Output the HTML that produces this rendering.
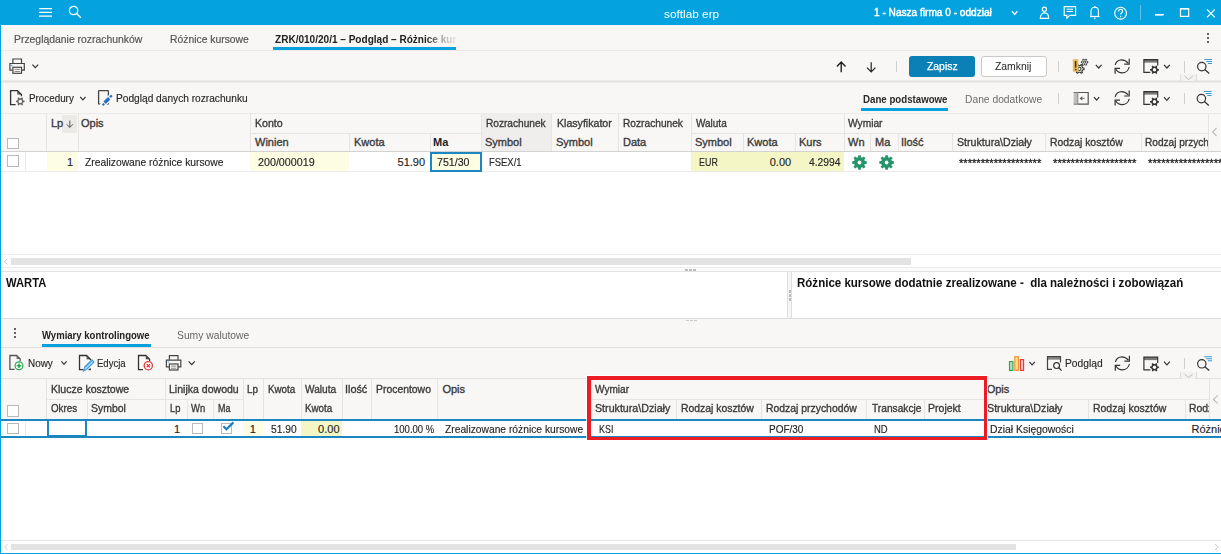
<!DOCTYPE html>
<html><head><meta charset="utf-8"><style>
html,body{margin:0;padding:0;width:1221px;height:554px;overflow:hidden;background:#f8f7f5;font-family:'Liberation Sans', sans-serif}
</style></head><body><div style="position:relative;width:1221px;height:554px;overflow:hidden">
<div style="position:absolute;left:0px;top:0px;width:1221px;height:554px;background:#f8f7f5"></div>
<div style="position:absolute;left:0px;top:0px;width:1221px;height:25px;background:#04a3e0"></div>
<div style="position:absolute;top:7px;font:400 11px/14px 'Liberation Sans', sans-serif;color:#fff;white-space:pre;left:664.20px;transform:scaleX(1.0733);transform-origin:0 0;">softlab erp</div>
<div style="position:absolute;top:5px;font:400 10.5px/14px 'Liberation Sans', sans-serif;color:#fff;white-space:pre;-webkit-text-stroke:0.45px #fff;left:874.00px;transform:scaleX(0.9618);transform-origin:0 0;">1 - Nasza firma 0 - oddział</div>
<div style="position:absolute;left:1140px;top:5px;width:1px;height:15px;background:#5cc3ea"></div>
<div style="position:absolute;left:1155px;top:14px;width:9px;height:1.3px;background:#fff"></div>
<div style="position:absolute;left:1180px;top:8px;width:9px;height:9px;border:1.2px solid #fff;box-sizing:border-box"></div>
<div style="position:absolute;left:0px;top:25px;width:1px;height:529px;background:#04a3e0"></div>
<div style="position:absolute;left:0px;top:553px;width:1221px;height:1px;background:#04a3e0"></div>
<div style="position:absolute;left:1px;top:50px;width:1221px;height:1px;background:#ebe9e6"></div>
<div style="position:absolute;top:32px;font:400 11px/14px 'Liberation Sans', sans-serif;color:#555;white-space:pre;-webkit-text-stroke:0.2px #555;left:14.30px;transform:scaleX(0.9448);transform-origin:0 0;">Przeglądanie rozrachunków</div>
<div style="position:absolute;top:32px;font:400 11px/14px 'Liberation Sans', sans-serif;color:#555;white-space:pre;-webkit-text-stroke:0.2px #555;left:169.50px;transform:scaleX(0.9409);transform-origin:0 0;">Różnice kursowe</div>
<div style="position:absolute;top:32px;font:700 11px/14px 'Liberation Sans', sans-serif;color:#222;white-space:pre;-webkit-mask-image:linear-gradient(90deg,#000 0,#000 166px,rgba(0,0,0,.45) 180px,rgba(0,0,0,.15) 194px,rgba(0,0,0,0) 204px);left:274.60px;transform:scaleX(0.9128);transform-origin:0 0;">ZRK/010/20/1 – Podgląd – Różnice kur</div>
<div style="position:absolute;left:273px;top:47px;width:183px;height:3px;background:#0aa0dd"></div>
<div style="position:absolute;left:1207px;top:33px;width:2.2px;height:2.2px;background:#333;border-radius:50%"></div>
<div style="position:absolute;left:1207px;top:37px;width:2.2px;height:2.2px;background:#333;border-radius:50%"></div>
<div style="position:absolute;left:1207px;top:41px;width:2.2px;height:2.2px;background:#333;border-radius:50%"></div>
<div style="position:absolute;left:1px;top:80px;width:1221px;height:1px;background:#ebebea"></div>
<div style="position:absolute;left:1px;top:81px;width:1221px;height:1px;background:#e0e0df"></div>
<div style="position:absolute;left:1px;top:82px;width:1221px;height:1px;background:#ececeb"></div>
<div style="position:absolute;left:896px;top:61px;width:1px;height:11px;background:#cfcfcf"></div>
<div style="position:absolute;left:909px;top:56px;width:66px;height:21px;background:#0b80b6;border-radius:3px"></div>
<div style="position:absolute;top:59px;font:400 11px/14px 'Liberation Sans', sans-serif;color:#fff;white-space:pre;-webkit-text-stroke:0.25px #fff;left:926.90px;transform:scaleX(0.9436);transform-origin:0 0;">Zapisz</div>
<div style="position:absolute;left:981px;top:56px;width:66px;height:21px;background:#fff;border:1px solid #c9c9c9;border-radius:3px;box-sizing:border-box"></div>
<div style="position:absolute;top:59px;font:400 11px/14px 'Liberation Sans', sans-serif;color:#222;white-space:pre;left:995.40px;transform:scaleX(0.9432);transform-origin:0 0;">Zamknij</div>
<div style="position:absolute;left:1058px;top:61px;width:1px;height:11px;background:#cfcfcf"></div>
<div style="position:absolute;left:1184px;top:61px;width:1px;height:12px;background:#cfcfcf"></div>
<div style="position:absolute;left:1180px;top:74px;width:17px;height:8px;background:#f3f2f0;border:1px solid #e0dedb;border-top:none;border-radius:0 0 3px 3px;box-sizing:border-box"></div>
<div style="position:absolute;left:1px;top:113px;width:1221px;height:1px;background:#ebebea"></div>
<div style="position:absolute;top:91px;font:400 10.5px/14px 'Liberation Sans', sans-serif;color:#262626;white-space:pre;-webkit-text-stroke:0.15px #262626;left:28.80px;transform:scaleX(0.9361);transform-origin:0 0;">Procedury</div>
<div style="position:absolute;top:91px;font:400 10.5px/14px 'Liberation Sans', sans-serif;color:#262626;white-space:pre;-webkit-text-stroke:0.15px #262626;left:115.50px;transform:scaleX(0.9679);transform-origin:0 0;">Podgląd danych rozrachunku</div>
<div style="position:absolute;top:92px;font:700 11px/14px 'Liberation Sans', sans-serif;color:#2a2a2a;white-space:pre;left:862.60px;transform:scaleX(0.8806);transform-origin:0 0;">Dane podstawowe</div>
<div style="position:absolute;left:861px;top:108px;width:87px;height:3px;background:#0aa0dd"></div>
<div style="position:absolute;top:92px;font:400 11px/14px 'Liberation Sans', sans-serif;color:#6c6c6c;white-space:pre;left:965.00px;transform:scaleX(0.9340);transform-origin:0 0;">Dane dodatkowe</div>
<div style="position:absolute;left:1058px;top:93px;width:1px;height:11px;background:#cfcfcf"></div>
<div style="position:absolute;left:1184px;top:93px;width:1px;height:11px;background:#cfcfcf"></div>
<div style="position:absolute;left:1px;top:114px;width:1221px;height:37px;background:#f8f7f5"></div>
<div style="position:absolute;left:1px;top:152px;width:1221px;height:103px;background:#fff"></div>
<div style="position:absolute;left:1px;top:151px;width:1221px;height:1px;background:#d2d2d1"></div>
<div style="position:absolute;left:46px;top:114px;width:1px;height:37px;background:#e6e4e1"></div>
<div style="position:absolute;left:78px;top:114px;width:1px;height:37px;background:#e6e4e1"></div>
<div style="position:absolute;left:250px;top:114px;width:1px;height:37px;background:#e6e4e1"></div>
<div style="position:absolute;left:481px;top:114px;width:1px;height:37px;background:#e6e4e1"></div>
<div style="position:absolute;left:551px;top:114px;width:1px;height:37px;background:#e6e4e1"></div>
<div style="position:absolute;left:618px;top:114px;width:1px;height:37px;background:#e6e4e1"></div>
<div style="position:absolute;left:691px;top:114px;width:1px;height:37px;background:#e6e4e1"></div>
<div style="position:absolute;left:844px;top:114px;width:1px;height:37px;background:#e6e4e1"></div>
<div style="position:absolute;left:250px;top:133px;width:231px;height:1px;background:#e6e4e1"></div>
<div style="position:absolute;left:691px;top:133px;width:153px;height:1px;background:#e6e4e1"></div>
<div style="position:absolute;left:844px;top:133px;width:364px;height:1px;background:#e6e4e1"></div>
<div style="position:absolute;left:349px;top:133px;width:1px;height:18px;background:#e6e4e1"></div>
<div style="position:absolute;left:430px;top:133px;width:1px;height:18px;background:#e6e4e1"></div>
<div style="position:absolute;left:743px;top:133px;width:1px;height:18px;background:#e6e4e1"></div>
<div style="position:absolute;left:795px;top:133px;width:1px;height:18px;background:#e6e4e1"></div>
<div style="position:absolute;left:870px;top:133px;width:1px;height:18px;background:#e6e4e1"></div>
<div style="position:absolute;left:898px;top:133px;width:1px;height:18px;background:#e6e4e1"></div>
<div style="position:absolute;left:952px;top:133px;width:1px;height:18px;background:#e6e4e1"></div>
<div style="position:absolute;left:1045px;top:133px;width:1px;height:18px;background:#e6e4e1"></div>
<div style="position:absolute;left:1141px;top:133px;width:1px;height:18px;background:#e6e4e1"></div>
<div style="position:absolute;left:482px;top:114px;width:69px;height:37px;background:#efeeec"></div>
<div style="position:absolute;left:62px;top:115px;width:15px;height:18px;background:#eceae7"></div>
<div style="position:absolute;left:1208px;top:114px;width:1px;height:37px;background:#e6e4e1"></div>
<div style="position:absolute;left:7px;top:138px;width:12px;height:11px;background:#fff;border:1px solid #b9b9b9;box-sizing:border-box"></div>
<div style="position:absolute;top:116px;font:400 11px/14px 'Liberation Sans', sans-serif;color:#3b3b3b;white-space:pre;-webkit-text-stroke:0.35px #3b3b3b;left:51.00px;">Lp</div>
<div style="position:absolute;top:116px;font:400 11px/14px 'Liberation Sans', sans-serif;color:#3b3b3b;white-space:pre;-webkit-text-stroke:0.35px #3b3b3b;left:81.00px;">Opis</div>
<div style="position:absolute;top:116px;font:400 11px/14px 'Liberation Sans', sans-serif;color:#3b3b3b;white-space:pre;-webkit-text-stroke:0.35px #3b3b3b;left:254.70px;transform:scaleX(0.9641);transform-origin:0 0;">Konto</div>
<div style="position:absolute;top:116px;font:400 11px/14px 'Liberation Sans', sans-serif;color:#3b3b3b;white-space:pre;-webkit-text-stroke:0.35px #3b3b3b;left:485.80px;transform:scaleX(0.9202);transform-origin:0 0;">Rozrachunek</div>
<div style="position:absolute;top:116px;font:400 11px/14px 'Liberation Sans', sans-serif;color:#3b3b3b;white-space:pre;-webkit-text-stroke:0.35px #3b3b3b;left:556.60px;transform:scaleX(0.9635);transform-origin:0 0;">Klasyfikator</div>
<div style="position:absolute;top:116px;font:400 11px/14px 'Liberation Sans', sans-serif;color:#3b3b3b;white-space:pre;-webkit-text-stroke:0.35px #3b3b3b;left:623.20px;transform:scaleX(0.9248);transform-origin:0 0;">Rozrachunek</div>
<div style="position:absolute;top:116px;font:400 11px/14px 'Liberation Sans', sans-serif;color:#3b3b3b;white-space:pre;-webkit-text-stroke:0.35px #3b3b3b;left:695.90px;transform:scaleX(0.9075);transform-origin:0 0;">Waluta</div>
<div style="position:absolute;top:116px;font:400 11px/14px 'Liberation Sans', sans-serif;color:#3b3b3b;white-space:pre;-webkit-text-stroke:0.35px #3b3b3b;left:848.00px;transform:scaleX(0.9277);transform-origin:0 0;">Wymiar</div>
<div style="position:absolute;top:135px;font:400 11px/14px 'Liberation Sans', sans-serif;color:#3b3b3b;white-space:pre;-webkit-text-stroke:0.35px #3b3b3b;left:255.00px;">Winien</div>
<div style="position:absolute;top:135px;font:400 11px/14px 'Liberation Sans', sans-serif;color:#3b3b3b;white-space:pre;-webkit-text-stroke:0.35px #3b3b3b;left:354.00px;">Kwota</div>
<div style="position:absolute;top:135px;font:700 11px/14px 'Liberation Sans', sans-serif;color:#222;white-space:pre;left:433.00px;">Ma</div>
<div style="position:absolute;top:135px;font:400 11px/14px 'Liberation Sans', sans-serif;color:#3b3b3b;white-space:pre;-webkit-text-stroke:0.35px #3b3b3b;left:485.00px;">Symbol</div>
<div style="position:absolute;top:135px;font:400 11px/14px 'Liberation Sans', sans-serif;color:#3b3b3b;white-space:pre;-webkit-text-stroke:0.35px #3b3b3b;left:556.00px;">Symbol</div>
<div style="position:absolute;top:135px;font:400 11px/14px 'Liberation Sans', sans-serif;color:#3b3b3b;white-space:pre;-webkit-text-stroke:0.35px #3b3b3b;left:623.00px;">Data</div>
<div style="position:absolute;top:135px;font:400 11px/14px 'Liberation Sans', sans-serif;color:#3b3b3b;white-space:pre;-webkit-text-stroke:0.35px #3b3b3b;left:695.00px;">Symbol</div>
<div style="position:absolute;top:135px;font:400 11px/14px 'Liberation Sans', sans-serif;color:#3b3b3b;white-space:pre;-webkit-text-stroke:0.35px #3b3b3b;left:747.00px;">Kwota</div>
<div style="position:absolute;top:135px;font:400 11px/14px 'Liberation Sans', sans-serif;color:#3b3b3b;white-space:pre;-webkit-text-stroke:0.35px #3b3b3b;left:799.00px;">Kurs</div>
<div style="position:absolute;top:135px;font:400 11px/14px 'Liberation Sans', sans-serif;color:#3b3b3b;white-space:pre;-webkit-text-stroke:0.35px #3b3b3b;left:848.00px;">Wn</div>
<div style="position:absolute;top:135px;font:400 11px/14px 'Liberation Sans', sans-serif;color:#3b3b3b;white-space:pre;-webkit-text-stroke:0.35px #3b3b3b;left:875.00px;">Ma</div>
<div style="position:absolute;top:135px;font:400 11px/14px 'Liberation Sans', sans-serif;color:#3b3b3b;white-space:pre;-webkit-text-stroke:0.35px #3b3b3b;left:901.00px;">Ilość</div>
<div style="position:absolute;top:135px;font:400 11px/14px 'Liberation Sans', sans-serif;color:#3b3b3b;white-space:pre;-webkit-text-stroke:0.35px #3b3b3b;left:956.60px;transform:scaleX(0.9650);transform-origin:0 0;">Struktura\Działy</div>
<div style="position:absolute;top:135px;font:400 11px/14px 'Liberation Sans', sans-serif;color:#3b3b3b;white-space:pre;-webkit-text-stroke:0.35px #3b3b3b;left:1049.60px;transform:scaleX(0.9431);transform-origin:0 0;">Rodzaj kosztów</div>
<div style="position:absolute;left:1141px;top:133px;width:67px;height:18px;overflow:hidden">
<div style="position:absolute;top:2px;font:400 11px/14px 'Liberation Sans', sans-serif;color:#3b3b3b;white-space:pre;-webkit-text-stroke:0.35px #3b3b3b;left:3.50px;transform:scaleX(0.9162);transform-origin:0 0;">Rodzaj przychodów</div>
</div>
<div style="position:absolute;left:1px;top:171px;width:1221px;height:1px;background:#ebebeb"></div>
<div style="position:absolute;left:25px;top:152px;width:1px;height:19px;background:#ececec"></div>
<div style="position:absolute;left:47px;top:152px;width:31px;height:19px;background:#fdfde3"></div>
<div style="position:absolute;left:250px;top:152px;width:99px;height:19px;background:#fdfde3"></div>
<div style="position:absolute;left:691px;top:152px;width:153px;height:19px;background:#f4f7c5"></div>
<div style="position:absolute;left:7px;top:155px;width:12px;height:12px;background:#fff;border:1px solid #b9b9b9;box-sizing:border-box"></div>
<div style="position:absolute;top:155px;font:400 11px/14px 'Liberation Sans', sans-serif;color:#262626;white-space:pre;-webkit-text-stroke:0.15px #262626;left:67.00px;">1</div>
<div style="position:absolute;top:155px;font:400 11px/14px 'Liberation Sans', sans-serif;color:#262626;white-space:pre;-webkit-text-stroke:0.15px #262626;left:84.60px;transform:scaleX(0.9362);transform-origin:0 0;">Zrealizowane różnice kursowe</div>
<div style="position:absolute;top:155px;font:400 11px/14px 'Liberation Sans', sans-serif;color:#262626;white-space:pre;-webkit-text-stroke:0.15px #262626;left:257.50px;transform:scaleX(0.9742);transform-origin:0 0;">200/000019</div>
<div style="position:absolute;top:155px;font:400 11px/14px 'Liberation Sans', sans-serif;color:#262626;white-space:pre;-webkit-text-stroke:0.15px #262626;left:397.59px;">51.90</div>
<div style="position:absolute;left:430px;top:152px;width:52px;height:20px;background:#fdfde3;border:2px solid #1b86c0;box-sizing:border-box"></div>
<div style="position:absolute;top:155px;font:400 11px/14px 'Liberation Sans', sans-serif;color:#262626;white-space:pre;-webkit-text-stroke:0.15px #262626;left:436.80px;transform:scaleX(0.9664);transform-origin:0 0;">751/30</div>
<div style="position:absolute;top:155px;font:400 11px/14px 'Liberation Sans', sans-serif;color:#262626;white-space:pre;-webkit-text-stroke:0.15px #262626;left:488.60px;transform:scaleX(0.8575);transform-origin:0 0;">FSEX/1</div>
<div style="position:absolute;top:155px;font:400 11px/14px 'Liberation Sans', sans-serif;color:#262626;white-space:pre;-webkit-text-stroke:0.15px #262626;left:698.60px;transform:scaleX(0.8118);transform-origin:0 0;">EUR</div>
<div style="position:absolute;top:155px;font:400 11px/14px 'Liberation Sans', sans-serif;color:#262626;white-space:pre;-webkit-text-stroke:0.15px #262626;left:769.71px;">0.00</div>
<div style="position:absolute;top:155px;font:400 11px/14px 'Liberation Sans', sans-serif;color:#262626;white-space:pre;-webkit-text-stroke:0.15px #262626;left:808.50px;transform:scaleX(0.9395);transform-origin:0 0;">4.2994</div>
<div style="position:absolute;left:952px;top:152px;width:93px;height:19px;overflow:hidden">
<div style="position:absolute;top:4px;font:400 11px/14px 'Liberation Sans', sans-serif;color:#222;white-space:pre;-webkit-text-stroke:0.3px #222;left:7.00px;transform:scaleX(1.0115);transform-origin:0 0;">*******************</div>
</div>
<div style="position:absolute;top:156px;font:400 11px/14px 'Liberation Sans', sans-serif;color:#222;white-space:pre;-webkit-text-stroke:0.3px #222;left:1052.60px;transform:scaleX(1.0237);transform-origin:0 0;">*******************</div>
<div style="position:absolute;top:156px;font:400 11px/14px 'Liberation Sans', sans-serif;color:#222;white-space:pre;-webkit-text-stroke:0.3px #222;left:1147.50px;transform:scaleX(1.0237);transform-origin:0 0;">*******************</div>
<div style="position:absolute;left:1px;top:254px;width:1221px;height:1px;background:#ececec"></div>
<div style="position:absolute;left:1px;top:255px;width:1221px;height:13px;background:#fff"></div>
<div style="position:absolute;left:11px;top:258px;width:900px;height:7px;background:#e3e3e3"></div>
<div style="position:absolute;left:1px;top:267px;width:1221px;height:1px;background:#ececec"></div>
<div style="position:absolute;left:1px;top:268px;width:1221px;height:3px;background:#fbfbfa"></div>
<div style="position:absolute;left:685px;top:269px;width:3px;height:1.5px;background:#bbb"></div>
<div style="position:absolute;left:689px;top:269px;width:3px;height:1.5px;background:#bbb"></div>
<div style="position:absolute;left:693px;top:269px;width:3px;height:1.5px;background:#bbb"></div>
<div style="position:absolute;left:1px;top:271px;width:1221px;height:1px;background:#e2e2e2"></div>
<div style="position:absolute;left:1px;top:272px;width:1221px;height:46px;background:#fff"></div>
<div style="position:absolute;left:787px;top:272px;width:1px;height:46px;background:#dedede"></div>
<div style="position:absolute;left:788px;top:272px;width:4px;height:46px;background:#f6f6f6"></div>
<div style="position:absolute;left:791px;top:272px;width:1px;height:46px;background:#dedede"></div>
<div style="position:absolute;left:789px;top:290px;width:1.5px;height:3px;background:#bbb"></div>
<div style="position:absolute;left:789px;top:294px;width:1.5px;height:3px;background:#bbb"></div>
<div style="position:absolute;left:789px;top:298px;width:1.5px;height:3px;background:#bbb"></div>
<div style="position:absolute;top:276px;font:700 12px/14px 'Liberation Sans', sans-serif;color:#111;white-space:pre;left:6.00px;transform:scaleX(0.9347);transform-origin:0 0;">WARTA</div>
<div style="position:absolute;top:276px;font:700 12px/14px 'Liberation Sans', sans-serif;color:#111;white-space:pre;left:796.70px;transform:scaleX(0.9608);transform-origin:0 0;">Różnice kursowe dodatnie zrealizowane -  dla należności i zobowiązań</div>
<div style="position:absolute;left:1px;top:318px;width:1221px;height:1px;background:#dcdcdc"></div>
<div style="position:absolute;left:686px;top:320px;width:3px;height:1px;background:#ccc"></div>
<div style="position:absolute;left:690px;top:320px;width:3px;height:1px;background:#ccc"></div>
<div style="position:absolute;left:694px;top:320px;width:3px;height:1px;background:#ccc"></div>
<div style="position:absolute;left:13.8px;top:328px;width:2.2px;height:2.2px;background:#333;border-radius:50%"></div>
<div style="position:absolute;left:13.8px;top:332px;width:2.2px;height:2.2px;background:#333;border-radius:50%"></div>
<div style="position:absolute;left:13.8px;top:336px;width:2.2px;height:2.2px;background:#333;border-radius:50%"></div>
<div style="position:absolute;top:328px;font:700 11px/14px 'Liberation Sans', sans-serif;color:#222;white-space:pre;left:41.80px;transform:scaleX(0.8686);transform-origin:0 0;">Wymiary kontrolingowe</div>
<div style="position:absolute;left:42px;top:344px;width:109px;height:3px;background:#0aa0dd"></div>
<div style="position:absolute;top:328px;font:400 11px/14px 'Liberation Sans', sans-serif;color:#666;white-space:pre;left:176.80px;transform:scaleX(0.9374);transform-origin:0 0;">Sumy walutowe</div>
<div style="position:absolute;left:1px;top:347px;width:1221px;height:1px;background:#e0dedb"></div>
<div style="position:absolute;top:356px;font:400 11px/14px 'Liberation Sans', sans-serif;color:#262626;white-space:pre;-webkit-text-stroke:0.15px #262626;left:27.50px;transform:scaleX(0.8998);transform-origin:0 0;">Nowy</div>
<div style="position:absolute;top:356px;font:400 11px/14px 'Liberation Sans', sans-serif;color:#262626;white-space:pre;-webkit-text-stroke:0.15px #262626;left:97.30px;transform:scaleX(0.8643);transform-origin:0 0;">Edycja</div>
<div style="position:absolute;top:356px;font:400 11px/14px 'Liberation Sans', sans-serif;color:#262626;white-space:pre;-webkit-text-stroke:0.15px #262626;left:1064.80px;transform:scaleX(0.9316);transform-origin:0 0;">Podgląd</div>
<div style="position:absolute;left:1184px;top:358px;width:1px;height:11px;background:#cfcfcf"></div>
<div style="position:absolute;left:1px;top:378px;width:1221px;height:1px;background:#e4e2df"></div>
<div style="position:absolute;left:1180px;top:372px;width:17px;height:8px;background:#f3f2f0;border:1px solid #e0dedb;border-top:none;border-radius:0 0 3px 3px;box-sizing:border-box"></div>
<div style="position:absolute;left:1px;top:379px;width:1221px;height:40px;background:#f8f7f5"></div>
<div style="position:absolute;left:46px;top:379px;width:1px;height:40px;background:#e6e4e1"></div>
<div style="position:absolute;left:243px;top:379px;width:1px;height:40px;background:#e6e4e1"></div>
<div style="position:absolute;left:263px;top:379px;width:1px;height:40px;background:#e6e4e1"></div>
<div style="position:absolute;left:301px;top:379px;width:1px;height:40px;background:#e6e4e1"></div>
<div style="position:absolute;left:342px;top:379px;width:1px;height:40px;background:#e6e4e1"></div>
<div style="position:absolute;left:371px;top:379px;width:1px;height:40px;background:#e6e4e1"></div>
<div style="position:absolute;left:437px;top:379px;width:1px;height:40px;background:#e6e4e1"></div>
<div style="position:absolute;left:591px;top:379px;width:1px;height:40px;background:#e6e4e1"></div>
<div style="position:absolute;left:987px;top:379px;width:1px;height:40px;background:#e6e4e1"></div>
<div style="position:absolute;left:47px;top:399px;width:196px;height:1px;background:#e6e4e1"></div>
<div style="position:absolute;left:591px;top:399px;width:396px;height:1px;background:#e6e4e1"></div>
<div style="position:absolute;left:987px;top:399px;width:222px;height:1px;background:#e6e4e1"></div>
<div style="position:absolute;left:87px;top:399px;width:1px;height:20px;background:#e6e4e1"></div>
<div style="position:absolute;left:165px;top:399px;width:1px;height:20px;background:#e6e4e1"></div>
<div style="position:absolute;left:187px;top:399px;width:1px;height:20px;background:#e6e4e1"></div>
<div style="position:absolute;left:213px;top:399px;width:1px;height:20px;background:#e6e4e1"></div>
<div style="position:absolute;left:676px;top:399px;width:1px;height:20px;background:#e6e4e1"></div>
<div style="position:absolute;left:761px;top:399px;width:1px;height:20px;background:#e6e4e1"></div>
<div style="position:absolute;left:866px;top:399px;width:1px;height:20px;background:#e6e4e1"></div>
<div style="position:absolute;left:924px;top:399px;width:1px;height:20px;background:#e6e4e1"></div>
<div style="position:absolute;left:1088px;top:399px;width:1px;height:20px;background:#e6e4e1"></div>
<div style="position:absolute;left:1185px;top:399px;width:1px;height:20px;background:#e6e4e1"></div>
<div style="position:absolute;left:165px;top:379px;width:1px;height:40px;background:#e6e4e1"></div>
<div style="position:absolute;left:1209px;top:379px;width:1px;height:40px;background:#e6e4e1"></div>
<div style="position:absolute;left:7px;top:405px;width:12px;height:12px;background:#fff;border:1px solid #b9b9b9;box-sizing:border-box"></div>
<div style="position:absolute;top:382px;font:400 11px/14px 'Liberation Sans', sans-serif;color:#3b3b3b;white-space:pre;-webkit-text-stroke:0.35px #3b3b3b;left:50.80px;transform:scaleX(0.9535);transform-origin:0 0;">Klucze kosztowe</div>
<div style="position:absolute;top:382px;font:400 11px/14px 'Liberation Sans', sans-serif;color:#3b3b3b;white-space:pre;-webkit-text-stroke:0.35px #3b3b3b;left:169.30px;transform:scaleX(0.9579);transform-origin:0 0;">Linijka dowodu</div>
<div style="position:absolute;top:382px;font:400 11px/14px 'Liberation Sans', sans-serif;color:#3b3b3b;white-space:pre;-webkit-text-stroke:0.35px #3b3b3b;left:247.40px;transform:scaleX(0.8913);transform-origin:0 0;">Lp</div>
<div style="position:absolute;top:382px;font:400 11px/14px 'Liberation Sans', sans-serif;color:#3b3b3b;white-space:pre;-webkit-text-stroke:0.35px #3b3b3b;left:268.10px;transform:scaleX(0.8902);transform-origin:0 0;">Kwota</div>
<div style="position:absolute;top:382px;font:400 11px/14px 'Liberation Sans', sans-serif;color:#3b3b3b;white-space:pre;-webkit-text-stroke:0.35px #3b3b3b;left:305.10px;transform:scaleX(0.9191);transform-origin:0 0;">Waluta</div>
<div style="position:absolute;top:382px;font:400 11px/14px 'Liberation Sans', sans-serif;color:#3b3b3b;white-space:pre;-webkit-text-stroke:0.35px #3b3b3b;left:345.41px;transform:scaleX(0.9856);transform-origin:0 0;">Ilość</div>
<div style="position:absolute;top:382px;font:400 11px/14px 'Liberation Sans', sans-serif;color:#3b3b3b;white-space:pre;-webkit-text-stroke:0.35px #3b3b3b;left:376.40px;transform:scaleX(0.9453);transform-origin:0 0;">Procentowo</div>
<div style="position:absolute;top:382px;font:400 11px/14px 'Liberation Sans', sans-serif;color:#3b3b3b;white-space:pre;-webkit-text-stroke:0.35px #3b3b3b;left:442.40px;">Opis</div>
<div style="position:absolute;top:382px;font:400 11px/14px 'Liberation Sans', sans-serif;color:#3b3b3b;white-space:pre;-webkit-text-stroke:0.35px #3b3b3b;left:595.40px;transform:scaleX(0.9144);transform-origin:0 0;">Wymiar</div>
<div style="position:absolute;top:382px;font:400 11px/14px 'Liberation Sans', sans-serif;color:#3b3b3b;white-space:pre;-webkit-text-stroke:0.35px #3b3b3b;left:986.70px;">Opis</div>
<div style="position:absolute;top:401px;font:400 11px/14px 'Liberation Sans', sans-serif;color:#3b3b3b;white-space:pre;-webkit-text-stroke:0.35px #3b3b3b;left:50.80px;transform:scaleX(0.8882);transform-origin:0 0;">Okres</div>
<div style="position:absolute;top:401px;font:400 11px/14px 'Liberation Sans', sans-serif;color:#3b3b3b;white-space:pre;-webkit-text-stroke:0.35px #3b3b3b;left:91.10px;transform:scaleX(0.9493);transform-origin:0 0;">Symbol</div>
<div style="position:absolute;top:401px;font:400 11px/14px 'Liberation Sans', sans-serif;color:#3b3b3b;white-space:pre;-webkit-text-stroke:0.35px #3b3b3b;left:169.70px;transform:scaleX(0.8500);transform-origin:0 0;">Lp</div>
<div style="position:absolute;top:401px;font:400 11px/14px 'Liberation Sans', sans-serif;color:#3b3b3b;white-space:pre;-webkit-text-stroke:0.35px #3b3b3b;left:191.00px;transform:scaleX(0.8607);transform-origin:0 0;">Wn</div>
<div style="position:absolute;top:401px;font:400 11px/14px 'Liberation Sans', sans-serif;color:#3b3b3b;white-space:pre;-webkit-text-stroke:0.35px #3b3b3b;left:217.90px;transform:scaleX(0.8105);transform-origin:0 0;">Ma</div>
<div style="position:absolute;top:401px;font:400 11px/14px 'Liberation Sans', sans-serif;color:#3b3b3b;white-space:pre;-webkit-text-stroke:0.35px #3b3b3b;left:305.10px;transform:scaleX(0.8902);transform-origin:0 0;">Kwota</div>
<div style="position:absolute;top:401px;font:400 11px/14px 'Liberation Sans', sans-serif;color:#3b3b3b;white-space:pre;-webkit-text-stroke:0.35px #3b3b3b;left:595.40px;transform:scaleX(0.9701);transform-origin:0 0;">Struktura\Działy</div>
<div style="position:absolute;top:401px;font:400 11px/14px 'Liberation Sans', sans-serif;color:#3b3b3b;white-space:pre;-webkit-text-stroke:0.35px #3b3b3b;left:680.60px;transform:scaleX(0.9444);transform-origin:0 0;">Rodzaj kosztów</div>
<div style="position:absolute;top:401px;font:400 11px/14px 'Liberation Sans', sans-serif;color:#3b3b3b;white-space:pre;-webkit-text-stroke:0.35px #3b3b3b;left:765.50px;transform:scaleX(0.9454);transform-origin:0 0;">Rodzaj przychodów</div>
<div style="position:absolute;top:401px;font:400 11px/14px 'Liberation Sans', sans-serif;color:#3b3b3b;white-space:pre;-webkit-text-stroke:0.35px #3b3b3b;left:871.50px;transform:scaleX(0.9255);transform-origin:0 0;">Transakcje</div>
<div style="position:absolute;top:401px;font:400 11px/14px 'Liberation Sans', sans-serif;color:#3b3b3b;white-space:pre;-webkit-text-stroke:0.35px #3b3b3b;left:927.50px;transform:scaleX(0.9567);transform-origin:0 0;">Projekt</div>
<div style="position:absolute;top:401px;font:400 11px/14px 'Liberation Sans', sans-serif;color:#3b3b3b;white-space:pre;-webkit-text-stroke:0.35px #3b3b3b;left:986.70px;transform:scaleX(0.9714);transform-origin:0 0;">Struktura\Działy</div>
<div style="position:absolute;top:401px;font:400 11px/14px 'Liberation Sans', sans-serif;color:#3b3b3b;white-space:pre;-webkit-text-stroke:0.35px #3b3b3b;left:1093.00px;transform:scaleX(0.9509);transform-origin:0 0;">Rodzaj kosztów</div>
<div style="position:absolute;left:1185px;top:399px;width:24px;height:20px;overflow:hidden">
<div style="position:absolute;top:2px;font:400 11px/14px 'Liberation Sans', sans-serif;color:#3b3b3b;white-space:pre;-webkit-text-stroke:0.35px #3b3b3b;left:3.70px;transform:scaleX(0.9474);transform-origin:0 0;">Rodzaj przychodów</div>
</div>
<div style="position:absolute;left:1px;top:419px;width:1221px;height:121px;background:#fff"></div>
<div style="position:absolute;left:1px;top:419px;width:1221px;height:2px;background:#1b86c0"></div>
<div style="position:absolute;left:1px;top:436px;width:1221px;height:2px;background:#1b86c0"></div>
<div style="position:absolute;left:25px;top:421px;width:1px;height:15px;background:#ececec"></div>
<div style="position:absolute;left:243px;top:421px;width:20px;height:15px;background:#fdfde3"></div>
<div style="position:absolute;left:301px;top:421px;width:41px;height:15px;background:#f4f7c5"></div>
<div style="position:absolute;left:47px;top:419px;width:40px;height:18px;border:2px solid #1b86c0;box-sizing:border-box"></div>
<div style="position:absolute;left:7px;top:423px;width:12px;height:11px;background:#fff;border:1px solid #b9b9b9;box-sizing:border-box"></div>
<div style="position:absolute;left:192px;top:423px;width:11px;height:11px;background:#fff;border:1px solid #bbb;box-sizing:border-box"></div>
<div style="position:absolute;left:221px;top:423px;width:11px;height:11px;background:#fff;border:1px solid #bbb;box-sizing:border-box"></div>
<div style="position:absolute;top:422px;font:400 11px/14px 'Liberation Sans', sans-serif;color:#262626;white-space:pre;-webkit-text-stroke:0.15px #262626;left:174.00px;">1</div>
<div style="position:absolute;top:422px;font:400 11px/14px 'Liberation Sans', sans-serif;color:#262626;white-space:pre;-webkit-text-stroke:0.15px #262626;left:249.80px;">1</div>
<div style="position:absolute;top:422px;font:400 11px/14px 'Liberation Sans', sans-serif;color:#262626;white-space:pre;-webkit-text-stroke:0.15px #262626;left:270.60px;transform:scaleX(0.9303);transform-origin:0 0;">51.90</div>
<div style="position:absolute;top:422px;font:400 11px/14px 'Liberation Sans', sans-serif;color:#262626;white-space:pre;-webkit-text-stroke:0.15px #262626;left:318.11px;">0.00</div>
<div style="position:absolute;top:422px;font:400 11px/14px 'Liberation Sans', sans-serif;color:#262626;white-space:pre;-webkit-text-stroke:0.15px #262626;left:393.50px;transform:scaleX(0.8672);transform-origin:0 0;">100.00 %</div>
<div style="position:absolute;top:422px;font:400 11px/14px 'Liberation Sans', sans-serif;color:#262626;white-space:pre;-webkit-text-stroke:0.15px #262626;left:445.30px;transform:scaleX(0.9335);transform-origin:0 0;">Zrealizowane różnice kursowe</div>
<div style="position:absolute;top:422px;font:400 11px/14px 'Liberation Sans', sans-serif;color:#262626;white-space:pre;-webkit-text-stroke:0.15px #262626;left:598.60px;transform:scaleX(0.8148);transform-origin:0 0;">KSI</div>
<div style="position:absolute;top:422px;font:400 11px/14px 'Liberation Sans', sans-serif;color:#262626;white-space:pre;-webkit-text-stroke:0.15px #262626;left:768.70px;transform:scaleX(0.9077);transform-origin:0 0;">POF/30</div>
<div style="position:absolute;top:422px;font:400 11px/14px 'Liberation Sans', sans-serif;color:#262626;white-space:pre;-webkit-text-stroke:0.15px #262626;left:873.70px;transform:scaleX(0.8593);transform-origin:0 0;">ND</div>
<div style="position:absolute;top:422px;font:400 11px/14px 'Liberation Sans', sans-serif;color:#262626;white-space:pre;-webkit-text-stroke:0.15px #262626;left:989.50px;transform:scaleX(0.9456);transform-origin:0 0;">Dział Księgowości</div>
<div style="position:absolute;top:422px;font:400 11px/14px 'Liberation Sans', sans-serif;color:#262626;white-space:pre;-webkit-text-stroke:0.15px #262626;left:1191.50px;">Różnice</div>
<div style="position:absolute;left:586px;top:375px;width:402px;height:66px;border:1px solid rgba(255,255,255,.8);box-sizing:border-box"></div>
<div style="position:absolute;left:587px;top:376px;width:400px;height:64px;border:solid #ec1c24;border-width:4px 3px 3px 4px;box-sizing:border-box"></div>
<div style="position:absolute;left:1px;top:540px;width:1221px;height:13px;background:#fff"></div>
<div style="position:absolute;left:1px;top:540px;width:1221px;height:1px;background:#e6e6e6"></div>
<div style="position:absolute;left:11px;top:544px;width:1005px;height:6px;background:#e3e3e3"></div>
<div style="position:absolute;left:0px;top:25px;width:1px;height:529px;background:#04a3e0"></div>
<div style="position:absolute;left:0px;top:553px;width:1221px;height:1px;background:#04a3e0"></div>
<svg style="position:absolute;left:0;top:0" width="1221" height="554"><path d="M39 8.6H52M39 12.4H52M39 16.2H52" fill="none" stroke="#fff" stroke-width="1.3" /><circle cx="73.6" cy="10.5" r="4.2" fill="none" stroke="#fff" stroke-width="1.2"/><path d="M76.6 13.6L80.8 17.8" fill="none" stroke="#fff" stroke-width="1.4" /><path d="M1012 11.2L1014.7 14.4L1017.4 11.2" fill="none" stroke="#fff" stroke-width="1.3" /><circle cx="1044.4" cy="9.2" r="2.1" fill="none" stroke="#fff" stroke-width="1.1"/><path d="M1044.4 11.3V12.6" fill="none" stroke="#fff" stroke-width="1" /><path d="M1040.3 18.4C1040.3 14.8 1042 12.9 1044.5 12.9C1047 12.9 1048.7 14.8 1048.7 18.4Z" fill="none" stroke="#fff" stroke-width="1.1" /><path d="M1064.2 6.6H1075.6V15.4H1069.8L1066.8 18.2V15.4H1064.2Z" fill="none" stroke="#fff" stroke-width="1.1" /><path d="M1066.6 9.2H1073M1066.6 11.5H1073" fill="none" stroke="#fff" stroke-width="1" /><path d="M1091 16.4V11.2C1091 8.8 1092.6 7.3 1094.7 7.3C1096.8 7.3 1098.4 8.8 1098.4 11.2V16.4" fill="none" stroke="#fff" stroke-width="1.1" /><path d="M1090 16.5H1099.5" fill="none" stroke="#fff" stroke-width="1.2" /><circle cx="1094.7" cy="6.8" r="0.8" fill="#fff"/><path d="M1093.9 18.3H1095.5" fill="none" stroke="#fff" stroke-width="1.3" /><circle cx="1120.6" cy="13.2" r="5.9" fill="none" stroke="#fff" stroke-width="1.1"/><path d="M1118.6 11.4C1118.6 10.1 1119.4 9.4 1120.6 9.4C1121.8 9.4 1122.6 10.2 1122.6 11.2C1122.6 12.6 1120.7 12.8 1120.7 14.5" fill="none" stroke="#fff" stroke-width="1.1" /><circle cx="1120.7" cy="16.5" r="0.7" fill="#fff"/><path d="M1155 15H1163.4" fill="none" stroke="#fff" stroke-width="1.3" /><rect x="1180.5" y="9" width="8.2" height="7.4" fill="none" stroke="#fff" stroke-width="1.2"/><path d="M1207 9.4L1214.8 17.3M1214.8 9.4L1207 17.3" fill="none" stroke="#fff" stroke-width="1.2" /><path d="M12.9 63.1V59.0H21.5V63.1" fill="none" stroke="#444" stroke-width="1.2" /><path d="M12.5 70.1H9.9V63.5H24.3V70.1H21.700000000000003" fill="none" stroke="#444" stroke-width="1.2" /><rect x="12.9" y="67.3" width="8.6" height="6" fill="#fff" stroke="#444" stroke-width="1.2"/><path d="M14.5 69.4H19.9M14.5 71.5H19.9" fill="none" stroke="#777" stroke-width="0.9" /><ellipse cx="11.9" cy="65.3" rx="0.9" ry="0.6" fill="#3a9ad9"/><path d="M32.4 64.6L35.3 67.6L38.2 64.6" fill="none" stroke="#333" stroke-width="1.2" /><path d="M841.2 72.2V62.2M836.9 66.4L841.2 62L845.5 66.4" fill="none" stroke="#222" stroke-width="1.4" /><path d="M871.2 62.3V71.8M867 67.6L871.2 71.8L875.4 67.6" fill="none" stroke="#222" stroke-width="1.2" /><path d="M1082.34 67.20 L1082.69 68.03 L1084.04 68.13 L1084.04 69.67 L1082.69 69.77 L1082.34 70.60 L1081.80 71.31 L1082.39 72.53 L1081.05 73.30 L1080.29 72.18 L1079.40 72.30 L1078.51 72.18 L1077.75 73.30 L1076.41 72.53 L1077.00 71.31 L1076.46 70.60 L1076.11 69.77 L1074.76 69.67 L1074.76 68.13 L1076.11 68.03 L1076.46 67.20 L1077.00 66.49 L1076.41 65.27 L1077.75 64.50 L1078.51 65.62 L1079.40 65.50 L1080.29 65.62 L1081.05 64.50 L1082.39 65.27 L1081.80 66.49Z" fill="#fff" stroke="#333" stroke-width="1.1" stroke-linejoin="round"/><circle cx="1079.4" cy="68.9" r="1.6" fill="none" stroke="#333" stroke-width="1.1"/><path d="M1086.68 61.00 L1086.92 61.58 L1087.86 61.66 L1087.86 62.74 L1086.92 62.82 L1086.68 63.40 L1086.29 63.90 L1086.70 64.75 L1085.76 65.29 L1085.23 64.52 L1084.60 64.60 L1083.97 64.52 L1083.44 65.29 L1082.50 64.75 L1082.91 63.90 L1082.52 63.40 L1082.28 62.82 L1081.34 62.74 L1081.34 61.66 L1082.28 61.58 L1082.52 61.00 L1082.91 60.50 L1082.50 59.65 L1083.44 59.11 L1083.97 59.88 L1084.60 59.80 L1085.23 59.88 L1085.76 59.11 L1086.70 59.65 L1086.29 60.50Z" fill="#fff" stroke="#333" stroke-width="1.0" stroke-linejoin="round"/><circle cx="1084.6" cy="62.2" r="1.1" fill="none" stroke="#333" stroke-width="1.0"/><rect x="1072.8" y="59.2" width="5.6" height="12.5" fill="#e8bb55"/><path d="M1075.6 61V67.6" fill="none" stroke="#333" stroke-width="1.5" /><rect x="1074.9" y="68.9" width="1.5" height="1.5" fill="#333"/><path d="M1095.8 64.8L1098.6999999999998 68L1101.6 64.8" fill="none" stroke="#333" stroke-width="1.2" /><path d="M1115.2 65.0C1115.8 62.0 1118.6 59.8 1121.6 59.8C1124.4 59.8 1126.6 61.199999999999996 1128.2 63.199999999999996" fill="none" stroke="#333" stroke-width="1.2" /><path d="M1129.2 58.8V64.2H1124.2" fill="none" stroke="#333" stroke-width="1.2" /><path d="M1129.2 67.0C1128.6 70.2 1125.8 72.8 1122.2 72.8C1119.4 72.8 1117.2 71.4 1115.8 69.2" fill="none" stroke="#333" stroke-width="1.2" /><path d="M1115.1 73.8V68.3H1120" fill="none" stroke="#333" stroke-width="1.2" /><rect x="1143.8999999999999" y="59.6" width="13.8" height="3" fill="#777"/><path d="M1150.3 72.4H1143.8999999999999V59.6H1157.7V65.5" fill="none" stroke="#333" stroke-width="1.2" /><path d="M1157.36 68.15 L1157.69 68.95 L1158.94 69.06 L1158.94 70.54 L1157.69 70.65 L1157.36 71.45 L1156.83 72.14 L1157.36 73.27 L1156.08 74.01 L1155.36 72.99 L1154.50 73.10 L1153.64 72.99 L1152.92 74.01 L1151.64 73.27 L1152.17 72.14 L1151.64 71.45 L1151.31 70.65 L1150.06 70.54 L1150.06 69.06 L1151.31 68.95 L1151.64 68.15 L1152.17 67.46 L1151.64 66.33 L1152.92 65.59 L1153.64 66.61 L1154.50 66.50 L1155.36 66.61 L1156.08 65.59 L1157.36 66.33 L1156.83 67.46Z" fill="#333"/><circle cx="1154.5" cy="69.8" r="1.7" fill="#fff"/><path d="M1164 64.8L1166.9 68L1169.8 64.8" fill="none" stroke="#333" stroke-width="1.2" /><circle cx="1201.8" cy="66.6" r="4.2" fill="none" stroke="#333" stroke-width="1.2"/><path d="M1204.8 69.6L1209.2 73.4" fill="none" stroke="#333" stroke-width="1.3" /><path d="M1204.4 59.5H1212M1206.2 61.5H1212M1207.8 63.5H1212" fill="none" stroke="#3a9ad9" stroke-width="1.1" /><path d="M15.6 104.6H10.6V90.6H17.4L21.4 94.6V96.2" fill="none" stroke="#333" stroke-width="1.3" /><path d="M17.4 90.6V94.6H21.4Z" fill="#333"/><path d="M18.4 92.6V93.6H19.4Z" fill="#fff"/><path d="M23.07 99.80 L23.39 100.58 L24.64 100.68 L24.64 102.12 L23.39 102.22 L23.07 103.00 L22.56 103.67 L23.10 104.80 L21.84 105.52 L21.14 104.49 L20.30 104.60 L19.46 104.49 L18.76 105.52 L17.50 104.80 L18.04 103.67 L17.53 103.00 L17.21 102.22 L15.96 102.12 L15.96 100.68 L17.21 100.58 L17.53 99.80 L18.04 99.13 L17.50 98.00 L18.76 97.28 L19.46 98.31 L20.30 98.20 L21.14 98.31 L21.84 97.28 L23.10 98.00 L22.56 99.13Z" fill="#666"/><circle cx="20.3" cy="101.4" r="1.7" fill="#fff"/><path d="M80.2 96.8L82.9 99.8L85.6 96.8" fill="none" stroke="#333" stroke-width="1.2" /><rect x="98.6" y="90.6" width="9.8" height="13.6" rx="0.8" fill="none" stroke="#444" stroke-width="1.3"/><path d="M101.4 106.4L112.6 95.2" stroke="#f8f7f5" stroke-width="5.5"/><path d="M102.6 105.2L104.2 103.6" fill="none" stroke="#2a6fc0" stroke-width="2" /><path d="M104.6 102.8L109.2 98.2" fill="none" stroke="#2a6fc0" stroke-width="3.4" /><path d="M110 97.2L111.8 95.4" fill="none" stroke="#2a6fc0" stroke-width="2.2" /><rect x="1073.6" y="92.5" width="4.2" height="11.8" fill="#bdbdbd"/><path d="M1077.8 92.5H1088.2V104.2H1077.8" fill="none" stroke="#555" stroke-width="1.2" /><path d="M1077.8 92.5V104.2" fill="none" stroke="#888" stroke-width="1" /><path d="M1073.6 92.5H1077.8M1073.6 104.2H1077.8" fill="none" stroke="#777" stroke-width="1" /><path d="M1079.6 98.4L1082.4 96.2V100.6Z" fill="#555"/><path d="M1082 98.4H1084.6" fill="none" stroke="#888" stroke-width="1.2" /><path d="M1094 97.2L1096.6 100.2L1099.2 97.2" fill="none" stroke="#333" stroke-width="1.2" /><path d="M1115.2 96.8C1115.8 93.8 1118.6 91.60000000000001 1121.6 91.60000000000001C1124.4 91.60000000000001 1126.6 93.0 1128.2 95.0" fill="none" stroke="#333" stroke-width="1.2" /><path d="M1129.2 90.60000000000001V96.0H1124.2" fill="none" stroke="#333" stroke-width="1.2" /><path d="M1129.2 98.8C1128.6 102.0 1125.8 104.60000000000001 1122.2 104.60000000000001C1119.4 104.60000000000001 1117.2 103.2 1115.8 101.0" fill="none" stroke="#333" stroke-width="1.2" /><path d="M1115.1 105.60000000000001V100.10000000000001H1120" fill="none" stroke="#333" stroke-width="1.2" /><rect x="1143.8999999999999" y="91.6" width="13.8" height="3" fill="#777"/><path d="M1150.3 104.4H1143.8999999999999V91.6H1157.7V97.5" fill="none" stroke="#333" stroke-width="1.2" /><path d="M1157.36 100.15 L1157.69 100.95 L1158.94 101.06 L1158.94 102.54 L1157.69 102.65 L1157.36 103.45 L1156.83 104.14 L1157.36 105.27 L1156.08 106.01 L1155.36 104.99 L1154.50 105.10 L1153.64 104.99 L1152.92 106.01 L1151.64 105.27 L1152.17 104.14 L1151.64 103.45 L1151.31 102.65 L1150.06 102.54 L1150.06 101.06 L1151.31 100.95 L1151.64 100.15 L1152.17 99.46 L1151.64 98.33 L1152.92 97.59 L1153.64 98.61 L1154.50 98.50 L1155.36 98.61 L1156.08 97.59 L1157.36 98.33 L1156.83 99.46Z" fill="#333"/><circle cx="1154.5" cy="101.8" r="1.7" fill="#fff"/><path d="M1164 97.2L1166.8 100.4L1169.6 97.2" fill="none" stroke="#333" stroke-width="1.2" /><circle cx="1201.3999999999999" cy="98.6" r="4.2" fill="none" stroke="#333" stroke-width="1.2"/><path d="M1204.3999999999999 101.6L1208.8 105.4" fill="none" stroke="#333" stroke-width="1.3" /><path d="M1204.0 91.5H1211.6M1205.8 93.5H1211.6M1207.3999999999999 95.5H1211.6" fill="none" stroke="#3a9ad9" stroke-width="1.1" /><path d="M69.8 120.6V127.4M66.7 124.3L69.8 127.4L72.9 124.3" fill="none" stroke="#555" stroke-width="1.0" /><path d="M14.6 369.4H9.9V355.5H16.6L20.2 359.1V361" fill="none" stroke="#555" stroke-width="1.3" /><path d="M16.6 355.5V359.1H20.2Z" fill="#555"/><path d="M17.5 357.3V358.2H18.4Z" fill="#fff"/><circle cx="19" cy="365.7" r="3.9" fill="#fff" stroke="#22aa4c" stroke-width="1.2"/><path d="M19 363.4V368M16.7 365.7H21.3" stroke="#22aa4c" stroke-width="1.6"/><path d="M61.4 361.4L64.0 364.4L66.6 361.4" fill="none" stroke="#333" stroke-width="1.2" /><path d="M83.4 369.6H79.5V355.5H86.6L90.4 359.3V360" fill="none" stroke="#333" stroke-width="1.3" /><path d="M86.6 355.5V359.3H90.4Z" fill="#333"/><path d="M87.5 357.3V358.3H88.5Z" fill="#fff"/><path d="M88.6 369.6H90.2V368.2" fill="none" stroke="#333" stroke-width="1.2" /><path d="M83.6 371L84.8 366.8L91.8 359.8L94 362L87 369Z" fill="#bfe0f7" stroke="#3d9be0" stroke-width="1.1"/><path d="M85.6 367.6L92.4 360.8" fill="none" stroke="#3d9be0" stroke-width="0.8" /><path d="M143 369.6H138.5V355.5H145.8L149.6 359.3V361" fill="none" stroke="#333" stroke-width="1.3" /><path d="M145.8 355.5V359.3H149.6Z" fill="#333"/><path d="M146.7 357.3V358.3H147.7Z" fill="#fff"/><circle cx="148.3" cy="365.7" r="4.1" fill="#fff" stroke="#e63c3c" stroke-width="1.3"/><path d="M146.7 364.1L149.9 367.3M149.9 364.1L146.7 367.3" fill="none" stroke="#e63c3c" stroke-width="1.3" /><path d="M169.4 359.8V355.7H178.0V359.8" fill="none" stroke="#444" stroke-width="1.2" /><path d="M169.0 366.8H166.4V360.2H180.8V366.8H178.20000000000002" fill="none" stroke="#444" stroke-width="1.2" /><rect x="169.4" y="364.0" width="8.6" height="6" fill="#fff" stroke="#444" stroke-width="1.2"/><path d="M171.0 366.09999999999997H176.4M171.0 368.2H176.4" fill="none" stroke="#777" stroke-width="0.9" /><ellipse cx="168.4" cy="362.0" rx="0.9" ry="0.6" fill="#3a9ad9"/><path d="M188.6 361.4L191.7 364.6L194.8 361.4" fill="none" stroke="#333" stroke-width="1.2" /><rect x="1009.5" y="361.6" width="3.4" height="8.8" fill="#b5e0c0" stroke="#1da64a" stroke-width="1.1"/><rect x="1014.8" y="356.7" width="3.6" height="13.7" fill="#f9dc8c" stroke="#ef8f35" stroke-width="1.1"/><rect x="1020.4" y="359.6" width="3.2" height="10.8" fill="#f7c3c3" stroke="#e63535" stroke-width="1.1"/><path d="M1029.4 361.8L1032.1 364.8L1034.8 361.8" fill="none" stroke="#333" stroke-width="1.2" /><rect x="1047.5" y="356.7" width="13" height="3" fill="#888"/><path d="M1052 369.4H1047.5V356.7H1060.5V362.6" fill="none" stroke="#444" stroke-width="1.2" /><circle cx="1056.6" cy="365.6" r="2.9" fill="#fff" stroke="#333" stroke-width="1.2"/><path d="M1058.8 367.8L1061.6 370.6" fill="none" stroke="#333" stroke-width="1.3" /><path d="M1115.4 362.0C1116.0 359.0 1118.8 356.79999999999995 1121.8 356.79999999999995C1124.6000000000001 356.79999999999995 1126.8 358.2 1128.4 360.2" fill="none" stroke="#333" stroke-width="1.2" /><path d="M1129.4 355.79999999999995V361.2H1124.4" fill="none" stroke="#333" stroke-width="1.2" /><path d="M1129.4 364.0C1128.8 367.2 1126.0 369.79999999999995 1122.4 369.79999999999995C1119.6000000000001 369.79999999999995 1117.4 368.4 1116.0 366.2" fill="none" stroke="#333" stroke-width="1.2" /><path d="M1115.3 370.79999999999995V365.29999999999995H1120.2" fill="none" stroke="#333" stroke-width="1.2" /><rect x="1143.8999999999999" y="357.1" width="13.8" height="3" fill="#777"/><path d="M1150.3 369.9H1143.8999999999999V357.1H1157.7V363.0" fill="none" stroke="#333" stroke-width="1.2" /><path d="M1157.36 365.65 L1157.69 366.45 L1158.94 366.56 L1158.94 368.04 L1157.69 368.15 L1157.36 368.95 L1156.83 369.64 L1157.36 370.77 L1156.08 371.51 L1155.36 370.49 L1154.50 370.60 L1153.64 370.49 L1152.92 371.51 L1151.64 370.77 L1152.17 369.64 L1151.64 368.95 L1151.31 368.15 L1150.06 368.04 L1150.06 366.56 L1151.31 366.45 L1151.64 365.65 L1152.17 364.96 L1151.64 363.83 L1152.92 363.09 L1153.64 364.11 L1154.50 364.00 L1155.36 364.11 L1156.08 363.09 L1157.36 363.83 L1156.83 364.96Z" fill="#333"/><circle cx="1154.5" cy="367.3" r="1.7" fill="#fff"/><path d="M1164 361.6L1166.9 364.8L1169.8 361.6" fill="none" stroke="#333" stroke-width="1.2" /><circle cx="1201.8" cy="363.8" r="4.2" fill="none" stroke="#333" stroke-width="1.2"/><path d="M1204.8 366.8L1209.2 370.59999999999997" fill="none" stroke="#333" stroke-width="1.3" /><path d="M1204.4 356.7H1212M1206.2 358.7H1212M1207.8 360.7H1212" fill="none" stroke="#3a9ad9" stroke-width="1.1" /><path d="M1216.6 128L1212.6 132L1216.6 136" fill="none" stroke="#bbb" stroke-width="1.1" /><path d="M1217.6 395.4L1213.4 399.4L1217.6 403.4" fill="none" stroke="#bbb" stroke-width="1.1" /><path d="M7.6 258.6L4.6 261.6L7.6 264.6" fill="none" stroke="#ccc" stroke-width="1" /><path d="M7.6 544L4.6 547L7.6 550" fill="none" stroke="#ccc" stroke-width="1" /><path d="M1215 544L1218 547L1215 550" fill="none" stroke="#ccc" stroke-width="1" /><path d="M1184.6 76.2L1188.6 79.6L1192.6 76.2" fill="none" stroke="#bbb" stroke-width="1" /><path d="M1184.6 374.2L1188.6 377.6L1192.6 374.2" fill="none" stroke="#bbb" stroke-width="1" /><path d="M864.58 160.40 L864.80 161.04 L866.79 161.24 L866.79 163.76 L864.80 163.96 L864.58 164.60 L864.28 165.22 L865.54 166.77 L863.77 168.54 L862.22 167.28 L861.60 167.58 L860.96 167.80 L860.76 169.79 L858.24 169.79 L858.04 167.80 L857.40 167.58 L856.78 167.28 L855.23 168.54 L853.46 166.77 L854.72 165.22 L854.42 164.60 L854.20 163.96 L852.21 163.76 L852.21 161.24 L854.20 161.04 L854.42 160.40 L854.72 159.78 L853.46 158.23 L855.23 156.46 L856.78 157.72 L857.40 157.42 L858.04 157.20 L858.24 155.21 L860.76 155.21 L860.96 157.20 L861.60 157.42 L862.22 157.72 L863.77 156.46 L865.54 158.23 L864.28 159.78Z" fill="#25956a"/><circle cx="859.5" cy="162.5" r="1.9" fill="#fff"/><path d="M891.68 160.40 L891.90 161.04 L893.89 161.24 L893.89 163.76 L891.90 163.96 L891.68 164.60 L891.38 165.22 L892.64 166.77 L890.87 168.54 L889.32 167.28 L888.70 167.58 L888.06 167.80 L887.86 169.79 L885.34 169.79 L885.14 167.80 L884.50 167.58 L883.88 167.28 L882.33 168.54 L880.56 166.77 L881.82 165.22 L881.52 164.60 L881.30 163.96 L879.31 163.76 L879.31 161.24 L881.30 161.04 L881.52 160.40 L881.82 159.78 L880.56 158.23 L882.33 156.46 L883.88 157.72 L884.50 157.42 L885.14 157.20 L885.34 155.21 L887.86 155.21 L888.06 157.20 L888.70 157.42 L889.32 157.72 L890.87 156.46 L892.64 158.23 L891.38 159.78Z" fill="#25956a"/><circle cx="886.6" cy="162.5" r="1.9" fill="#fff"/><path d="M223.4 426.2L226.4 429.2L233.4 422.4" fill="none" stroke="#1b7fc4" stroke-width="2.2" /></svg>
</div></body></html>
